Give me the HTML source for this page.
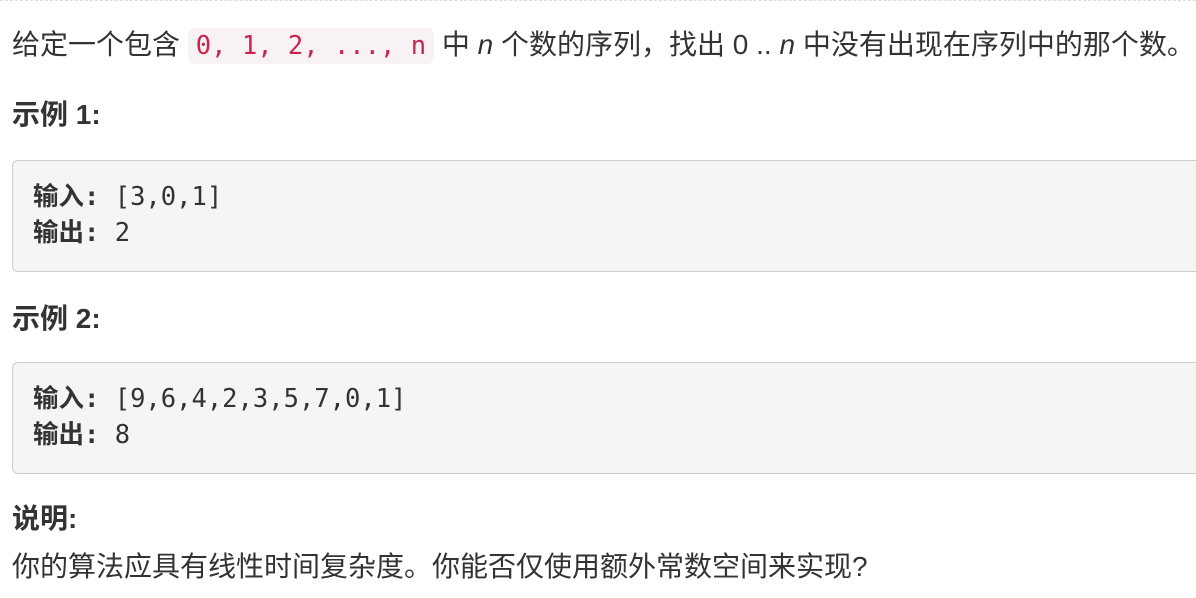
<!DOCTYPE html>
<html><head><meta charset="utf-8"><style>
body{margin:0;width:1196px;height:598px;background:#fff;position:relative;overflow:hidden;font-family:"Liberation Sans","Noto Sans CJK SC",sans-serif;color:#333;font-size:28px}
.t{position:absolute;left:12px;white-space:nowrap;line-height:32px}
code{font-family:"DejaVu Sans Mono","Liberation Mono",monospace;color:#c7254e;background:#f9f2f4;border-radius:7px;padding:3px 8px;font-size:25.5px}
.box{position:absolute;left:12px;width:1200px;height:112px;background:#f5f5f5;border:1px solid #ccc;border-radius:6px;box-sizing:border-box}
.box pre{margin:0;position:absolute;left:20px;top:18px;font-family:"DejaVu Sans Mono","Liberation Mono","Noto Sans CJK SC",monospace;font-size:25.5px;line-height:36px;color:#333}
b{font-weight:bold}
.dash{position:absolute;left:0;top:0;width:1196px;border-top:1px dashed #ddd}
</style></head><body>
<div class="dash"></div>
<div class="t" style="top:29px">给定一个包含 <code>0, 1, 2, ..., n</code> 中 <i>n</i> 个数的序列，找出 0 .. <i>n</i> 中没有出现在序列中的那个数。</div>
<div class="t" style="top:99px;font-weight:bold">示例 1:</div>
<div class="box" style="top:160px"><pre><b>输入:</b> [3,0,1]
<b>输出:</b> 2</pre></div>
<div class="t" style="top:303px;font-weight:bold">示例 2:</div>
<div class="box" style="top:362px"><pre><b>输入:</b> [9,6,4,2,3,5,7,0,1]
<b>输出:</b> 8</pre></div>
<div class="t" style="top:503px;font-weight:bold">说明:</div>
<div class="t" style="top:551px">你的算法应具有线性时间复杂度。你能否仅使用额外常数空间来实现?</div>
</body></html>
